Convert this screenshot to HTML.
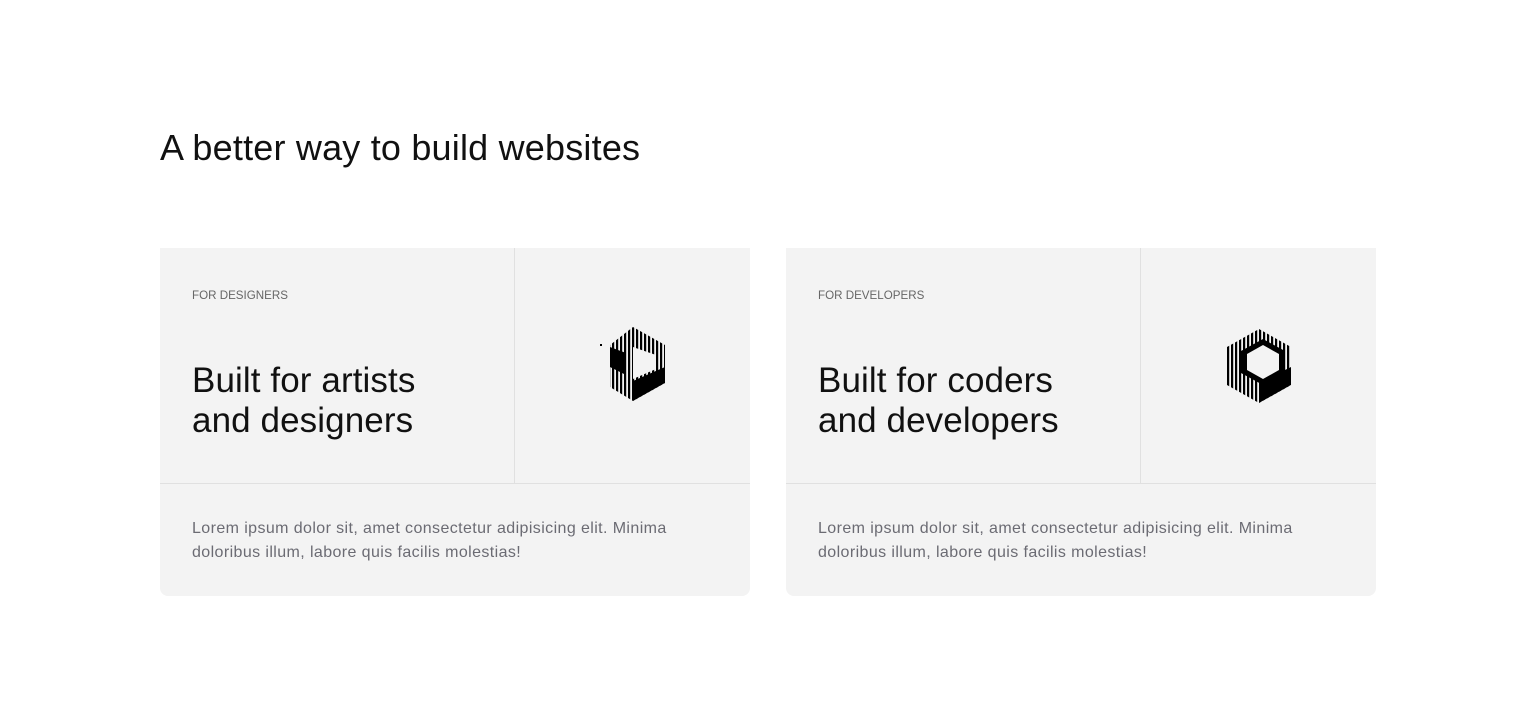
<!DOCTYPE html>
<html><head><style>
body{margin:0;background:#fff;font-family:"Liberation Sans",sans-serif;width:1536px;height:724px;overflow:hidden;position:relative}
h1{position:absolute;left:160px;top:127px;margin:0;font-size:36px;font-weight:400;color:#111;letter-spacing:0.2px}
.card{position:absolute;top:248px;width:590px;height:348px;background:#f3f3f3;border-radius:0 0 8px 8px}
.vl{position:absolute;left:354px;top:0;width:1px;height:235px;background:#e0e0e0}
.hl{position:absolute;left:0;top:235px;width:590px;height:1px;background:#e0e0e0}
.lab{position:absolute;left:32px;top:41px;font-size:11.6px;color:#666}
.tt{position:absolute;left:32px;top:113px;font-size:35px;line-height:40px;color:#111;letter-spacing:0.1px}
.ds{position:absolute;left:32px;top:269px;font-size:16px;line-height:24px;color:#6b6b73;letter-spacing:0.4px}
svg{position:absolute}
</style></head><body>
<h1>A better way to build websites</h1>
<div class="card" style="left:160px">
<div class="vl"></div><div class="hl"></div>
<div class="lab">FOR DESIGNERS</div>
<div class="tt">Built for artists<br>and designers</div>
<div class="ds">Lorem ipsum dolor sit, amet consectetur adipisicing elit. Minima<br>doloribus illum, labore quis facilis molestias!</div>
<svg style="left:440px;top:79px" width="66" height="74" viewBox="0 0 66 74">
<defs><pattern id="s1" width="4" height="4" patternUnits="userSpaceOnUse"><rect width="2.2" height="4" fill="#000"/></pattern>
<clipPath id="h1"><polygon points="33,0 65,18 65,56 33,74 10,60 10,18"/></clipPath></defs>
<g clip-path="url(#h1)">
<rect width="66" height="74" fill="url(#s1)"/>
<polygon points="10,20 26,26 26,48 10,40" fill="#000"/>
<polygon points="33,54 65,40 65,56 33,74" fill="#000"/>
<polygon points="33,20 56,28 56,42 33,52" fill="#f3f3f3"/>
</g>
<rect x="0" y="17" width="2" height="2"/>
</svg>
</div>
<div class="card" style="left:786px">
<div class="vl"></div><div class="hl"></div>
<div class="lab">FOR DEVELOPERS</div>
<div class="tt">Built for coders<br>and developers</div>
<div class="ds">Lorem ipsum dolor sit, amet consectetur adipisicing elit. Minima<br>doloribus illum, labore quis facilis molestias!</div>
<svg style="left:441px;top:81px" width="64" height="74" viewBox="0 0 64 74">
<defs><pattern id="s2" width="4" height="4" patternUnits="userSpaceOnUse"><rect width="2.2" height="4" fill="#000"/></pattern>
<clipPath id="h2"><polygon points="32,0 64,18 64,56 32,74 0,56 0,18"/></clipPath></defs>
<g clip-path="url(#h2)">
<rect width="64" height="74" fill="url(#s2)"/>
<polygon points="32,54 64,38 64,56 32,74" fill="#000"/>
<polygon points="36,10 58,22 58,44 36,56 14,44 14,22" fill="#000"/>
<polygon points="36,16 52,25 52,41 36,50 20,41 20,25" fill="#f3f3f3"/>
</g>
</svg>
</div>
</body></html>
